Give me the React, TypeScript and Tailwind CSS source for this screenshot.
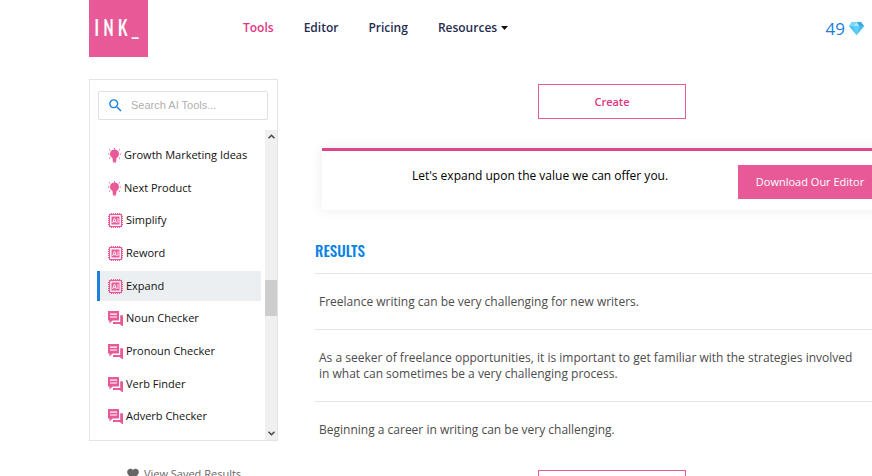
import { MdFavorite, MdSearch } from 'react-icons/md';

type IconName = 'bulb' | 'chip' | 'chat';

const tools: { label: string; icon: IconName }[] = [
  { label: 'Growth Marketing Ideas', icon: 'bulb' },
  { label: 'Next Product', icon: 'bulb' },
  { label: 'Simplify', icon: 'chip' },
  { label: 'Reword', icon: 'chip' },
  { label: 'Expand', icon: 'chip' },
  { label: 'Noun Checker', icon: 'chat' },
  { label: 'Pronoun Checker', icon: 'chat' },
  { label: 'Verb Finder', icon: 'chat' },
  { label: 'Adverb Checker', icon: 'chat' },
];

const results = [
  'Freelance writing can be very challenging for new writers.',
  'As a seeker of freelance opportunities, it is important to get familiar with the strategies involved in what can sometimes be a very challenging process.',
  'Beginning a career in writing can be very challenging.',
];

function BulbIcon() {
  return (
    <svg className="h-[15px] w-[13px] shrink-0" viewBox="0 0 13 15" fill="#e75a97">
      <path d="M6.5 1.6C3.9 1.6 2 3.5 2 5.9c0 1.6.8 2.7 1.8 3.5.6.5.9 1 .9 1.5v2.3h3.6v-2.3c0-.5.3-1 .9-1.5 1-.8 1.8-1.9 1.8-3.5 0-2.4-1.900-4.3-4.5-4.3z" />
      <path d="M5.2 13h2.6v1.6H5.2z" />
      <path
        d="M6.5 0v1.3M1 1.3l1.3 1.2M12 1.3l-1.3 1.2M0 6h1.3M11.7 6H13M1 10.7l1.3-1.2M12 10.7l-1.3-1.2"
        stroke="#e75a97"
        strokeWidth="1"
      />
    </svg>
  );
}

function ChipIcon() {
  return (
    <svg className="h-[15px] w-[15px] shrink-0" viewBox="0 0 15 15" fill="none" stroke="#e75a97">
      <rect x="1.5" y="1.5" width="12" height="12" strokeWidth="1.2" />
      <path
        d="M3.5 0v1M5.5 0v1M7.5 0v1M9.5 0v1M11.5 0v1M3.5 14v1M5.5 14v1M7.5 14v1M9.5 14v1M11.5 14v1M0 3.5h1M0 5.5h1M0 7.5h1M0 9.5h1M0 11.5h1M14 3.5h1M14 5.5h1M14 7.5h1M14 9.5h1M14 11.5h1"
        strokeWidth="1"
      />
      <rect x="3.5" y="3.5" width="8" height="8" fill="#e75a97" stroke="none" />
      <path d="M4.6 10l1.7-4.6h.5L8.4 10M5.4 8.7h2.3M10 5.2V10" stroke="#fff" strokeWidth=".9" />
    </svg>
  );
}

function ChatIcon() {
  return (
    <svg className="h-[15px] w-[15px] shrink-0" viewBox="0 0 15 15" fill="#e75a97">
      <path d="M0 0h11v9.6H4.6L1.4 12.6V9.6H0zM2 2.6v1.1h7V2.6zM2 5.5v1.1h7V5.5z" fillRule="evenodd" />
      <path d="M12.2 4.2H15V15h-1l-2.2-2H5v-1.900h7.2z" />
    </svg>
  );
}

function ToolIcon({ name }: { name: IconName }) {
  if (name === 'bulb') return <BulbIcon />;
  if (name === 'chip') return <ChipIcon />;
  return <ChatIcon />;
}

function Diamond() {
  return (
    <svg className="h-[13px] w-[15px]" viewBox="0 0 15 13">
      <path d="M3 0h9l3 4.3L7.5 13 0 4.3z" fill="#4fc3f7" />
      <path d="M3 0h4.5L4.6 4.3H0z" fill="#7ad7fa" />
      <path d="M7.5 0H12l3 4.3h-4.6z" fill="#3aa9dd" />
      <path d="M7.5 0l2.9 4.3H4.6z" fill="#a9e8fd" />
      <path d="M10.4 4.3H15L7.5 13z" fill="#4cbcec" />
      <path d="M4.6 4.3h5.8L7.5 13z" fill="#5fd0fa" />
    </svg>
  );
}

function CreateButton() {
  return (
    <button className="h-[35px] w-[148px] shrink-0 border border-[#e75a97] pt-px text-[11px] font-semibold text-[#e0367f]">
      Create
    </button>
  );
}

function Header() {
  return (
    <header className="flex h-[57px] shrink-0 items-center pr-2 pl-[89px]">
      <a
        href="#"
        className="flex h-full w-[59px] items-center justify-center bg-[#e75a97] pb-1 font-['Oswald','Liberation_Sans',sans-serif] text-[20px] tracking-[4px] text-white"
      >
        INK_
      </a>
      <nav className="ml-[95px] flex items-center gap-[30px] pb-[2px] text-xs font-semibold text-[#1f2d50]">
        <a href="#" className="text-[#e0367f]">Tools</a>
        <a href="#">Editor</a>
        <a href="#">Pricing</a>
        <button className="flex items-center gap-1">
          Resources
          <svg className="h-1 w-[7px]" viewBox="0 0 7 4">
            <path d="M0 0h7L3.5 4z" fill="#111" />
          </svg>
        </button>
      </nav>
      <div className="ml-auto flex items-center gap-1 text-[17px] font-medium text-[#1a80dc]">
        49
        <Diamond />
      </div>
    </header>
  );
}

function Sidebar() {
  return (
    <aside className="w-[189px] shrink-0">
      <div className="border border-[#e4e4e4]">
        <label className="mt-[11px] mr-[9px] ml-2 flex h-[29px] items-center rounded-xs border border-[#e0e0e0] pl-2">
          <MdSearch className="h-[17px] w-[17px] shrink-0 text-[#1a80dc]" />
          <input
            type="text"
            aria-label="Search AI tools"
            placeholder="Search AI Tools..."
            className="ml-[7px] w-full min-w-0 font-['Liberation_Sans',sans-serif] text-[11px] outline-none placeholder:text-[#b0b0b0]"
          />
        </label>
        <div className="mt-[10px] flex h-[310px]">
          <ul className="flex flex-1 flex-col gap-[2px] pt-[10px] pr-1 pb-2 pl-[7px]">
            {tools.map((tool) => (
              <li key={tool.label} className="flex min-h-0 flex-1">
                <a
                  href="#"
                  className={
                    tool.label === 'Expand'
                      ? 'flex flex-1 items-center gap-[3px] border-l-3 border-[#1a80dc] bg-[#eceff1] pl-2'
                      : 'flex flex-1 items-center gap-[3px] border-l-3 border-transparent pl-2'
                  }
                >
                  <ToolIcon name={tool.icon} />
                  <span className="text-[11px] font-medium whitespace-nowrap text-[#111]">{tool.label}</span>
                </a>
              </li>
            ))}
          </ul>
          <div className="flex w-3 flex-col items-center bg-[#f0f0f0] py-1">
            <svg className="h-[5px] w-[7px]" viewBox="0 0 7 5" fill="none" stroke="#444" strokeWidth="1.5">
              <path d="M.5 4.2l3-3 3 3" />
            </svg>
            <div className="mt-[141px] h-9 w-full bg-[#cdcdcd]" />
            <svg className="mt-auto h-[5px] w-[7px]" viewBox="0 0 7 5" fill="none" stroke="#444" strokeWidth="1.5">
              <path d="M.5.8l3 3 3-3" />
            </svg>
          </div>
        </div>
      </div>
      <a href="#" className="mt-[25px] flex items-center justify-center gap-1 text-[11px] text-[#666]">
        <MdFavorite className="h-[14px] w-[14px]" />
        View Saved Results
      </a>
    </aside>
  );
}

export default function App() {
  return (
    <div className="flex h-screen flex-col overflow-hidden bg-white font-['Open_Sans','Noto_Sans',sans-serif]">
      <Header />
      <div className="flex pt-[22px] pl-[89px]">
        <Sidebar />
        {/* the results column runs past the right edge of the window */}
        <main className="-mr-[37px] ml-[37px] flex min-w-0 flex-1 flex-col items-center pt-[5px]">
          <CreateButton />
          <section className="mt-[29px] flex self-stretch px-[7px]">
            <div className="flex h-[62px] flex-1 border-t-3 border-[#e0458a] px-5 pt-[14px] shadow-[0_0_12px_rgba(0,0,0,0.08)]">
              <p className="flex-1 pt-[2px] text-center text-xs leading-[18px] text-black">
                Let's expand upon the value we can offer you.
              </p>
              <button className="h-[34px] w-36 bg-[#e75a97] text-[11px] font-medium text-white">
                Download Our Editor
              </button>
            </div>
          </section>
          <h2 className="mt-[29px] self-stretch font-['Oswald','Liberation_Sans',sans-serif] text-[15px] leading-[22px] font-medium text-[#0a82e4]">
            RESULTS
          </h2>
          <ul className="mt-3 self-stretch">
            {results.map((text) => (
              <li key={text} className="border-t border-[#e6e6e6] pt-5 pr-14 pb-[19px] pl-1 text-xs leading-4 text-[#4c4c4c]">
                {text}
              </li>
            ))}
          </ul>
          <div className="mt-[13px]">
            <CreateButton />
          </div>
        </main>
      </div>
    </div>
  );
}
